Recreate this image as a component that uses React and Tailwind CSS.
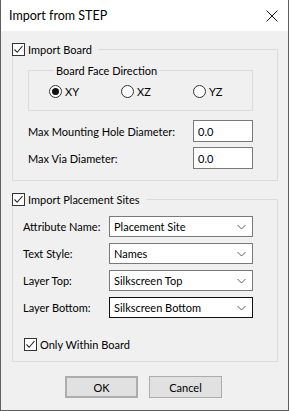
import React from 'react';

function Check({ checked = true }) {
  return (
    <span className="w-[13px] h-[13px] border border-[#333333] bg-white flex items-center justify-center shrink-0">
      {checked && (
        <svg width="11" height="11" viewBox="0 0 11 11">
          <path d="M1.5 5.5 L4.2 8.3 L9.5 2" fill="none" stroke="#222" strokeWidth="1.1" />
        </svg>
      )}
    </span>
  );
}

function Radio({ label, checked, last }) {
  return (
    <div className={(last ? '' : 'w-[72px] ') + 'flex items-center gap-[3px]'}>
      <span className="w-[13px] h-[13px] rounded-full border border-[#333333] bg-white flex items-center justify-center shrink-0">
        {checked && <span className="w-[7px] h-[7px] rounded-full bg-[#111111]" />}
      </span>
      <span>{label}</span>
    </div>
  );
}

function Chevron() {
  return (
    <svg width="9" height="6" viewBox="0 0 9 6" className="shrink-0">
      <path d="M0.5 1 L4.5 5 L8.5 1" fill="none" stroke="#606060" strokeWidth="1" />
    </svg>
  );
}

function Select({ value, focused }) {
  return (
    <div
      className={
        'w-[144px] h-[21px] bg-white border flex items-center justify-between pl-[4px] pr-[6px] shrink-0 ' +
        (focused ? 'border-[#111111]' : 'border-[#7a7a7a]')
      }
    >
      <span>{value}</span>
      <Chevron />
    </div>
  );
}

function Field({ label, value, last }) {
  return (
    <div className="flex items-center justify-between h-[21px]">
      <span className="whitespace-nowrap">{label}</span>
      <Select value={value} focused={last} />
    </div>
  );
}

export default function App() {
  return (
    <div className="w-[289px] h-[411px] bg-[#f0f0f0] border-x border-b border-[#5f5f5f] flex flex-col text-[11px] leading-[15px] text-black font-['Lato',sans-serif] whitespace-nowrap">
      {/* Title bar */}
      <div className="h-[31px] bg-white flex items-center justify-between pl-[8px] pr-[10px] shrink-0">
        <span className="text-[12.5px]">Import from STEP</span>
        <svg width="12" height="12" viewBox="0 0 12 12">
          <path d="M0.5 0.5 L11.5 11.5 M11.5 0.5 L0.5 11.5" stroke="#111" strokeWidth="1" />
        </svg>
      </div>

      <div className="pl-[11px] pt-[12px]">
        {/* Import Board */}
        <fieldset className="w-[266px] border border-[#dcdcdc] pl-[15px] pr-[24px] pt-[7px] pb-[11px]">
          <legend className="-ml-[16px] pr-[6px] flex items-center gap-[3px] h-[13px]">
            <Check />
            <span>Import Board</span>
          </legend>

          <fieldset className="w-[225px] border border-[#dcdcdc] pl-[20px] pt-[7px] pb-[12px]">
            <legend className="ml-[5px] px-[2px]">Board Face Direction</legend>
            <div className="flex items-center h-[13px]">
              <Radio label="XY" checked />
              <Radio label="XZ" />
              <Radio label="YZ" last />
            </div>
          </fieldset>

          <div className="mt-[9px] flex items-center justify-between">
            <span>Max Mounting Hole Diameter:</span>
            <div className="w-[60px] h-[22px] bg-white border border-[#7a7a7a] flex items-center pl-[4px]">0.0</div>
          </div>
          <div className="mt-[5px] flex items-center justify-between">
            <span>Max Via Diameter:</span>
            <div className="w-[60px] h-[22px] bg-white border border-[#7a7a7a] flex items-center pl-[4px]">0.0</div>
          </div>
        </fieldset>

        {/* Import Placement Sites */}
        <fieldset className="mt-[12px] w-[266px] border border-[#dcdcdc] pl-[10px] pr-[24px] pt-[10px] pb-[10px]">
          <legend className="-ml-[11px] pr-[6px] flex items-center gap-[3px] h-[13px]">
            <Check />
            <span>Import Placement Sites</span>
          </legend>

          <div className="flex flex-col gap-[6px]">
            <Field label="Attribute Name:" value="Placement Site" />
            <Field label="Text Style:" value="Names" />
            <Field label="Layer Top:" value="Silkscreen Top" />
            <Field label="Layer Bottom:" value="Silkscreen Bottom" last />
          </div>

          <div className="mt-[20px] ml-[1px] flex items-center gap-[3px] h-[13px]">
            <Check />
            <span>Only Within Board</span>
          </div>
        </fieldset>
      </div>

      {/* Buttons */}
      <div className="mt-[14px] pl-[64px] flex gap-[11px]">
        <button className="w-[73px] h-[22px] bg-[#e1e1e1] border-2 border-[#adadad] flex items-center justify-center">OK</button>
        <button className="w-[73px] h-[22px] bg-[#e1e1e1] border border-[#adadad] flex items-center justify-center">Cancel</button>
      </div>
    </div>
  );
}
